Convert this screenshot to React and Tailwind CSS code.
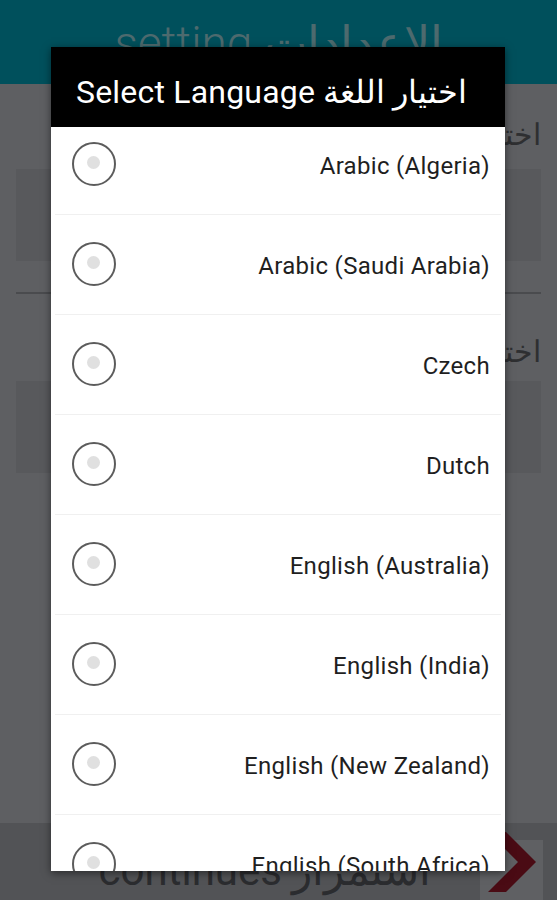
const languages = [
  'Arabic (Algeria)',
  'Arabic (Saudi Arabia)',
  'Czech',
  'Dutch',
  'English (Australia)',
  'English (India)',
  'English (New Zealand)',
  'English (South Africa)',
];

function Radio() {
  return (
    <div className="w-[44px] h-[44px] rounded-full border-2 border-[#5c5c5c] flex items-center justify-center shrink-0">
      <div className="w-[13px] h-[13px] rounded-full bg-[#e0e0e0] -translate-x-[1px] -translate-y-[1px]" />
    </div>
  );
}

function LanguageRow({ name }) {
  return (
    <div className="h-[100px] mx-[4px] border-b border-[#f0f0f0] flex items-center justify-between pl-[17px] pr-[11px]">
      <div className="-mt-[2px]">
        <Radio />
      </div>
      <span className="text-[24px] tracking-[0.3px] text-[#1f1f1f] mt-[3px]">{name}</span>
    </div>
  );
}

export default function App() {
  return (
    <div
      className="relative w-[557px] h-[900px] overflow-hidden bg-[#5e5f62] flex flex-col"
      style={{ fontFamily: 'Roboto, "Noto Sans", sans-serif' }}
    >
      {/* dimmed page behind the dialog */}
      <div className="h-[84px] bg-[#00505c] flex justify-center overflow-hidden shrink-0">
        <span className="text-[46px] leading-none mt-[20px] text-[#4d6a6e] font-light">
          setting الإعدادات
        </span>
      </div>

      <div className="px-[16px] flex flex-col">
        <div className="text-right text-[30px] text-[#2e2f31] leading-none mt-[36px]">اختر</div>
        <div className="h-[92px] bg-[#58595c] mt-[19px]" />
        <div className="h-[2px] bg-[#4a4b4e] mt-[31px]" />
        <div className="text-right text-[30px] text-[#2e2f31] leading-none mt-[43px]">اختر</div>
        <div className="h-[92px] bg-[#58595c] mt-[14px]" />
      </div>

      <div className="mt-auto h-[77px] bg-[#525356] flex items-end">
        <div className="flex-1 flex justify-center">
          <span className="text-[42px] leading-none text-[#2b2c2f] mb-[8px] ml-[50px]">continues استمرار</span>
        </div>
        <div className="w-[63px] h-[60px] bg-[#5f6063] mr-[14px] flex items-center justify-center">
          <svg width="56" height="70" viewBox="0 0 56 70" className="-mt-[6px]">
            <path d="M4 0 L22 0 L52 30 L22 60 L4 60 L34 30 Z" fill="#4a0b14" />
          </svg>
        </div>
      </div>

      {/* dialog */}
      <div className="absolute left-[51px] top-[47px] w-[454px] h-[824px] bg-white flex flex-col shadow-[0_2px_8px_rgba(0,0,0,0.5)]">
        <div className="h-[80px] bg-black flex items-center pl-[25px] pt-[10px] shrink-0">
          <span className="text-[32px] text-white tracking-[0.2px]">Select Language اختيار اللغة</span>
        </div>
        <div className="flex-1 overflow-hidden">
          <div className="-mt-[12px]">
            {languages.map((l) => (
              <LanguageRow key={l} name={l} />
            ))}
          </div>
        </div>
      </div>
    </div>
  );
}
